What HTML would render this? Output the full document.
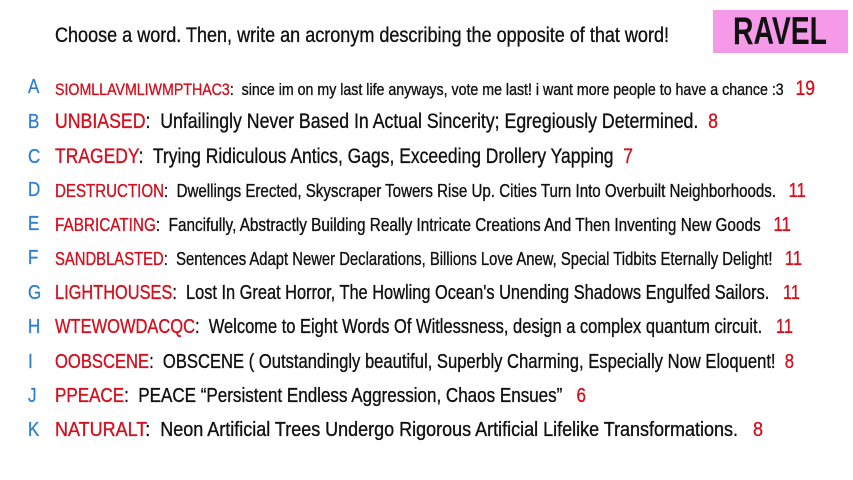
<!DOCTYPE html>
<html><head><meta charset="utf-8">
<style>
html,body{margin:0;padding:0;background:#fff;width:853px;height:480px;overflow:hidden}
body{position:relative;font-family:"Liberation Sans Narrow","Liberation Sans",sans-serif;color:#111}
.l{position:absolute;white-space:nowrap;transform-origin:0 50%;line-height:1;-webkit-text-stroke:0.35px currentColor}
.l span{-webkit-text-stroke:0.35px currentColor}
.k{position:absolute;left:28px;color:#2d7fd6;font-size:20px;line-height:1;transform:scaleX(0.85);transform-origin:0 0;-webkit-text-stroke:0.3px #2d7fd6}
.r{color:#d4101e}
#box{position:absolute;left:713px;top:10px;width:135px;height:43px;background:#f49ae8}
#rv{position:absolute;left:733px;top:12px;font-size:39px;font-weight:bold;color:#111;line-height:1;transform-origin:0 0}
</style></head><body>
<div id="box"></div>
<div id="rv">RAVEL</div>
<div class="l" id="t" style="left:55px;top:25px;font-size:21px">Choose a word. Then, write an acronym describing the opposite of that word!</div>

<div class="k" style="top:77px">A</div>
<div class="l" style="left:55px;top:78px;font-size:17px"><span class="r">SIOMLLAVMLIWMPTHAC3</span>:&nbsp; since im on my last life anyways, vote me last! i want more people to have a chance :3 &nbsp;&nbsp;<span class="r" style="font-size:21px">19</span></div>
<div class="k" style="top:112px">B</div>
<div class="l" style="left:55px;top:111px;font-size:21px"><span class="r">UNBIASED</span>:&nbsp; Unfailingly Never Based In Actual Sincerity; Egregiously Determined. &nbsp;<span class="r">8</span></div>
<div class="k" style="top:147px">C</div>
<div class="l" style="left:55px;top:146px;font-size:21px"><span class="r">TRAGEDY</span>:&nbsp; Trying Ridiculous Antics, Gags, Exceeding Drollery Yapping &nbsp;<span class="r">7</span></div>
<div class="k" style="top:180px">D</div>
<div class="l" style="left:55px;top:181px;font-size:18px"><span class="r">DESTRUCTION</span>:&nbsp; Dwellings Erected, Skyscraper Towers Rise Up. Cities Turn Into Overbuilt Neighborhoods. &nbsp;&nbsp;<span class="r" style="font-size:20px">11</span></div>
<div class="k" style="top:214px">E</div>
<div class="l" style="left:55px;top:215px;font-size:18px"><span class="r">FABRICATING</span>:&nbsp; Fancifully, Abstractly Building Really Intricate Creations And Then Inventing New Goods &nbsp;&nbsp;<span class="r" style="font-size:20px">11</span></div>
<div class="k" style="top:248px">F</div>
<div class="l" style="left:55px;top:249px;font-size:18px"><span class="r">SANDBLASTED</span>:&nbsp; Sentences Adapt Newer Declarations, Billions Love Anew, Special Tidbits Eternally Delight! &nbsp;&nbsp;<span class="r" style="font-size:20px">11</span></div>
<div class="k" style="top:283px">G</div>
<div class="l" style="left:55px;top:283px;font-size:20px"><span class="r">LIGHTHOUSES</span>:&nbsp; Lost In Great Horror, The Howling Ocean's Unending Shadows Engulfed Sailors. &nbsp;&nbsp;<span class="r">11</span></div>
<div class="k" style="top:317px">H</div>
<div class="l" style="left:55px;top:317px;font-size:20px"><span class="r">WTEWOWDACQC</span>:&nbsp; Welcome to Eight Words Of Witlessness, design a complex quantum circuit. &nbsp;&nbsp;<span class="r">11</span></div>
<div class="k" style="top:352px">I</div>
<div class="l" style="left:55px;top:352px;font-size:20px"><span class="r">OOBSCENE</span>:&nbsp; OBSCENE ( Outstandingly beautiful, Superbly Charming, Especially Now Eloquent! &nbsp;<span class="r">8</span></div>
<div class="k" style="top:386px">J</div>
<div class="l" style="left:55px;top:386px;font-size:20px"><span class="r">PPEACE</span>:&nbsp; PEACE “Persistent Endless Aggression, Chaos Ensues” &nbsp;&nbsp;<span class="r">6</span></div>
<div class="k" style="top:420px">K</div>
<div class="l" style="left:55px;top:420px;font-size:20px"><span class="r">NATURALT</span>:&nbsp; Neon Artificial Trees Undergo Rigorous Artificial Lifelike Transformations. &nbsp;&nbsp;<span class="r">8</span></div>
<script>
var ends=[669,815,718,633,806,791,802,800,793,794,586,763];
var ls=document.querySelectorAll('.l');
for(var i=0;i<ls.length;i++){var w=ls[i].getBoundingClientRect().width;ls[i].style.transform='scaleX('+((ends[i]-55)/w)+')';}
var rv=document.getElementById('rv');rv.style.transform='scaleX('+(94/rv.getBoundingClientRect().width)+')';
</script>
</body></html>
